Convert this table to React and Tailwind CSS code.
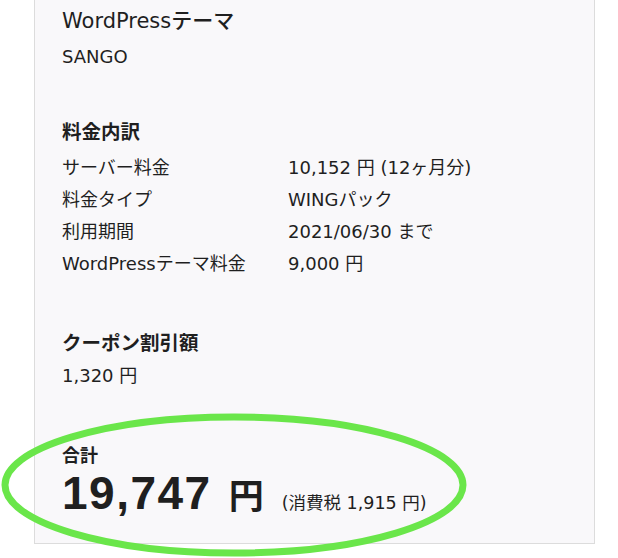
import React from "react";

const font = { fontFamily: '"DejaVu Sans", "Noto Sans CJK JP", sans-serif' };
const bigFont = { fontFamily: '"Liberation Sans", "Noto Sans CJK JP", sans-serif' };

const rows = [
  ["サーバー料金", "10,152 円 (12ヶ月分)"],
  ["料金タイプ", "WINGパック"],
  ["利用期間", "2021/06/30 まで"],
  ["WordPressテーマ料金", "9,000 円"],
];

export default function App() {
  return (
    <div className="relative h-[558px] w-[618px] bg-white text-[#1f1f1f]" style={font}>
      <div className="ml-[34px] h-[544px] w-[561px] border-x border-b border-[#dcdcdc] bg-[#f9f8fa] pl-[27px]">
        <div className="pt-[7px] text-[21px] font-medium leading-[28px]">WordPressテーマ</div>
        <div className="mt-[11px] text-[18px] leading-[22px]">SANGO</div>

        <div className="mt-[52px] text-[19.5px] font-semibold leading-[26px]">料金内訳</div>
        <div className="mt-[6px] flex flex-col text-[18px] leading-[32px]">
          {rows.map(([label, value]) => (
            <div key={label} className="flex">
              <div className="w-[226px]">{label}</div>
              <div>{value}</div>
            </div>
          ))}
        </div>

        <div className="mt-[51px] text-[19.5px] font-semibold leading-[26px]">クーポン割引額</div>
        <div className="mt-[8px] text-[18px] leading-[22px]">1,320 円</div>

        <div className="mt-[57px] text-[18px] font-semibold leading-[24px]">合計</div>
        <div className="flex items-baseline">
          <span className="text-[46px] font-bold leading-[50px] tracking-[1.5px]" style={bigFont}>
            19,747
          </span>
          <span className="ml-[17px] text-[35px] font-semibold leading-[50px]">円</span>
          <span className="ml-[18px] text-[17.5px]">(消費税 1,915 円)</span>
        </div>
      </div>

      <svg className="pointer-events-none absolute left-0 top-0" width="618" height="558">
        <ellipse cx="234" cy="485" rx="229" ry="68" fill="none" stroke="#6ae64a" strokeWidth="7" />
      </svg>
    </div>
  );
}
